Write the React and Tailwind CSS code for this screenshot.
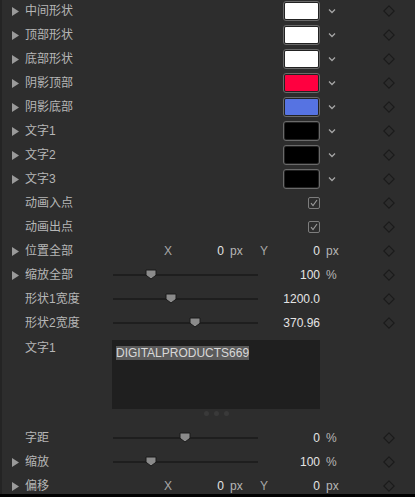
import { Fragment } from 'react'

const FONT = { fontFamily: '"Liberation Sans", "Noto Sans CJK SC", sans-serif' }

const SWATCHES = [
  { label: '中间形状', color: 'bg-[#ffffff]' },
  { label: '顶部形状', color: 'bg-[#ffffff]' },
  { label: '底部形状', color: 'bg-[#ffffff]' },
  { label: '阴影顶部', color: 'bg-[#ff0040]' },
  { label: '阴影底部', color: 'bg-[#5673e2]' },
  { label: '文字1', color: 'bg-[#000000]' },
  { label: '文字2', color: 'bg-[#000000]' },
  { label: '文字3', color: 'bg-[#000000]' },
]

function Tri({ show }) {
  return (
    <div className="w-[13px] flex items-center">
      {show && (
        <svg width="7" height="9" viewBox="0 0 7 9">
          <path d="M0 0 L7 4.5 L0 9 Z" fill="#9a9a9a" />
        </svg>
      )}
    </div>
  )
}

function Diamond() {
  return (
    <div className="w-[12px] flex items-center justify-center">
      <svg width="12" height="12" viewBox="0 0 12 12">
        <path d="M6 0.8 L11.2 6 L6 11.2 L0.8 6 Z" fill="none" stroke="#1b1b1b" strokeWidth="1.1" />
      </svg>
    </div>
  )
}

function Row({ arrow, label, children, right }) {
  return (
    <div className="h-[24px] flex items-center pl-[12px] shrink-0">
      <Tri show={arrow} />
      <div className="w-[88px] text-[12px] text-[#b6b6b6] whitespace-nowrap">{label}</div>
      <div className="w-[207px] flex items-center h-full">{children}</div>
      <div className="w-[63px] flex items-center text-[12px] text-[#b6b6b6]">{right}</div>
      <Diamond />
    </div>
  )
}

function Slider({ pos }) {
  return (
    <div className="relative w-[145px] h-full flex items-center">
      <div className="w-full h-[2px] bg-[#1e1e1e]" />
      <svg className="absolute top-[6px]" style={{ left: pos - 6 }} width="12" height="11" viewBox="0 0 12 11">
        <path d="M1 1 H11 V6.2 L6 10 L1 6.2 Z" fill="#8b8b8b" stroke="#1a1a1a" strokeWidth="1" />
      </svg>
    </div>
  )
}

function SliderRow({ arrow, label, pos, value, unit }) {
  return (
    <Row arrow={arrow} label={label} right={<span className="pl-[6px]">{unit}</span>}>
      <Slider pos={pos} />
      <div className="flex-1 text-right text-[12px] text-[#e4e4e4]">{value}</div>
    </Row>
  )
}

function XYRow({ label }) {
  return (
    <Row arrow label={label} right={<span className="pl-[6px]">px</span>}>
      <div className="w-[59px] text-right text-[12px] text-[#a8a8a8]">X</div>
      <div className="w-[52px] text-right text-[12px] text-[#e4e4e4]">0</div>
      <div className="w-[36px] pl-[6px] text-[12px] text-[#b6b6b6]">px</div>
      <div className="flex-1 flex justify-between text-[12px]">
        <span className="text-[#a8a8a8]">Y</span>
        <span className="text-[#e4e4e4]">0</span>
      </div>
    </Row>
  )
}

function Check() {
  return (
    <div className="ml-auto w-[12px] h-[12px] rounded-[2px] border border-[#7d7d7d] flex items-center justify-center">
      <svg width="8" height="8" viewBox="0 0 8 8">
        <path d="M1 4.2 L3 6.5 L7 1" fill="none" stroke="#9a9a9a" strokeWidth="1.1" />
      </svg>
    </div>
  )
}

export default function App() {
  return (
    <div className="w-[415px] h-[497px] overflow-hidden bg-black" style={FONT}>
      <div className="h-[494px] flex bg-[#2d2d2d]">
        <div className="w-[2px] bg-[#242424] shrink-0" />
        <div className="flex flex-col -ml-[2px] mt-[-1px]">
          {SWATCHES.map(s => (
            <Row key={s.label} arrow label={s.label}
              right={
                <svg className="ml-[8px]" width="8" height="6" viewBox="0 0 8 6">
                  <path d="M1 1.5 L4 4.5 L7 1.5" fill="none" stroke="#a5a5a5" strokeWidth="1.3" />
                </svg>
              }>
              <div className="ml-auto w-[37px] h-[20px] rounded-[3px] border-[1.5px] border-[#6a6a6a] p-[1px] bg-[#222]">
                <div className={`w-full h-full rounded-[1px] ${s.color}`} />
              </div>
            </Row>
          ))}
          <Row label="动画入点"><Check /></Row>
          <Row label="动画出点"><Check /></Row>
          <XYRow label="位置全部" />
          <SliderRow arrow label="缩放全部" pos={38} value="100" unit="%" />
          <SliderRow label="形状1宽度" pos={58} value="1200.0" />
          <SliderRow label="形状2宽度" pos={82} value="370.96" />

          <div className="h-[91px] flex pl-[25px] pt-[5px] shrink-0">
            <div className="w-[87px] text-[12px] leading-[16px] text-[#b6b6b6]">文字1</div>
            <div className="flex flex-col items-center">
              <div className="w-[208px] h-[69px] bg-[#1f1f1f] px-[4px]">
                <span className="text-[12px] leading-[14px] inline-block bg-[#5b5b5b] text-[#d8d8d8]">DIGITALPRODUCTS669</span>
              </div>
              <div className="flex gap-[5px] mt-[2px]">
                {[0, 1, 2].map(i => (
                  <Fragment key={i}>
                    <div className="w-[5px] h-[5px] rounded-full bg-[#393939]" />
                  </Fragment>
                ))}
              </div>
            </div>
          </div>

          <SliderRow label="字距" pos={72} value="0" unit="%" />
          <SliderRow arrow label="缩放" pos={38} value="100" unit="%" />
          <XYRow label="偏移" />
        </div>
      </div>
    </div>
  )
}
